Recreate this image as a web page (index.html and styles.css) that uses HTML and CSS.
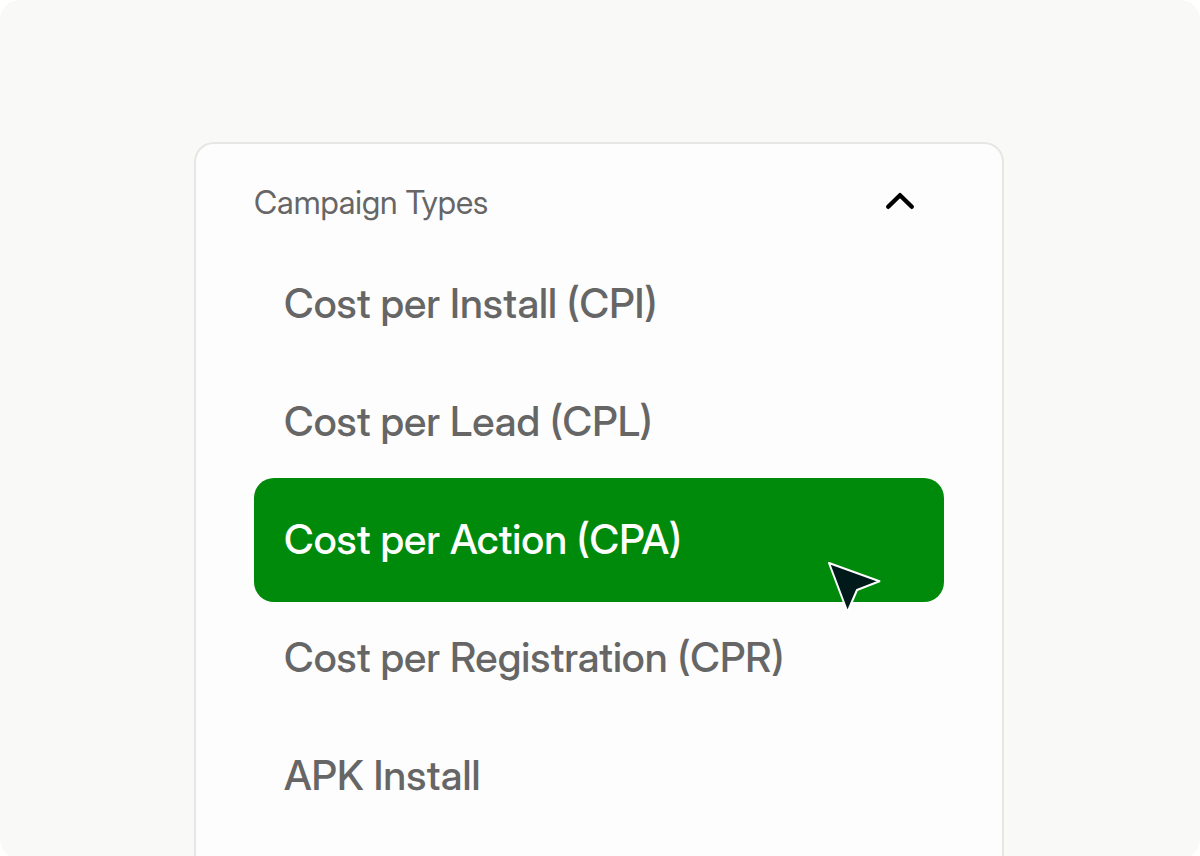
FILE: index.html
```html
<!DOCTYPE html>
<html lang="en">
<head>
    <meta charset="UTF-8">
    <meta name="viewport" content="width=device-width, initial-scale=1.0">
    <title>Campaign Types</title>
    <link rel="stylesheet" href="styles.css">
</head>
<body>
    <main class="stage">
        <section class="panel">
            <button class="panel-header" type="button" aria-expanded="true" aria-controls="campaign-types">
                <span>Campaign Types</span>
                <svg class="chevron" viewBox="0 0 32 24" aria-hidden="true">
                    <path d="M4.2 15.8 16 4.2 27.8 15.8"></path>
                </svg>
            </button>

            <div class="options" id="campaign-types">
                <button class="option" type="button">Cost per Install (CPI)</button>
                <button class="option" type="button">Cost per Lead (CPL)</button>
                <button class="option selected" type="button">
                    Cost per Action (CPA)
                    <svg class="cursor" viewBox="0 0 56 52" aria-hidden="true">
                        <path d="M3 2 53.5 20.2 31 29 21.5 51Z"></path>
                    </svg>
                </button>
                <button class="option" type="button">Cost per Registration (CPR)</button>
                <button class="option" type="button">APK Install</button>
            </div>
        </section>
    </main>
</body>
</html>
```
FILE: styles.css
```css
* {
    box-sizing: border-box;
}
body {
    margin: 0;
    background-color: #fff;
    font-family: "Inter Display", Inter, sans-serif;
    font-variation-settings: "opsz" 32;
    color: #666;
}
.stage {
    min-height: 100vh;
    display: flex;
    padding: 142px 196px 0 194px;
    background-color: #f9f9f7;
    border-radius: 20px;
}
.panel {
    width: 100%;
    padding: 39px 58px 24px;
    background-color: #fdfdfd;
    border: 2px solid #e6e6e5;
    border-bottom: none;
    border-radius: 20px 20px 0 0;
}
button {
    border: none;
    background: none;
    color: inherit;
    font-family: inherit;
    text-align: left;
    cursor: pointer;
}
.panel-header {
    display: flex;
    justify-content: space-between;
    align-items: center;
    width: 100%;
    padding: 0 28px 0 0;
    font-size: 32px;
    line-height: 40px;
}
.chevron {
    width: 32px;
    height: 24px;
    fill: none;
    stroke: #000;
    stroke-width: 4.4;
    stroke-linecap: round;
    stroke-linejoin: round;
}
.options {
    display: flex;
    flex-direction: column;
    margin-top: 22px;
}
.option {
    position: relative;
    padding: 31px 30px 33px;
    border-radius: 20px;
    font-size: 41px;
    font-weight: 500;
    line-height: 54px;
}
.selected {
    margin: -3px 0;
    padding: 34px 30px 36px;
    background-color: #008a0b;
    color: #fff;
}
.cursor {
    position: absolute;
    right: 62px;
    bottom: -11px;
    width: 56px;
    height: 52px;
    overflow: visible;
    fill: #001a1c;
    stroke: #fff;
    stroke-width: 2;
    stroke-linejoin: round;
}
```
